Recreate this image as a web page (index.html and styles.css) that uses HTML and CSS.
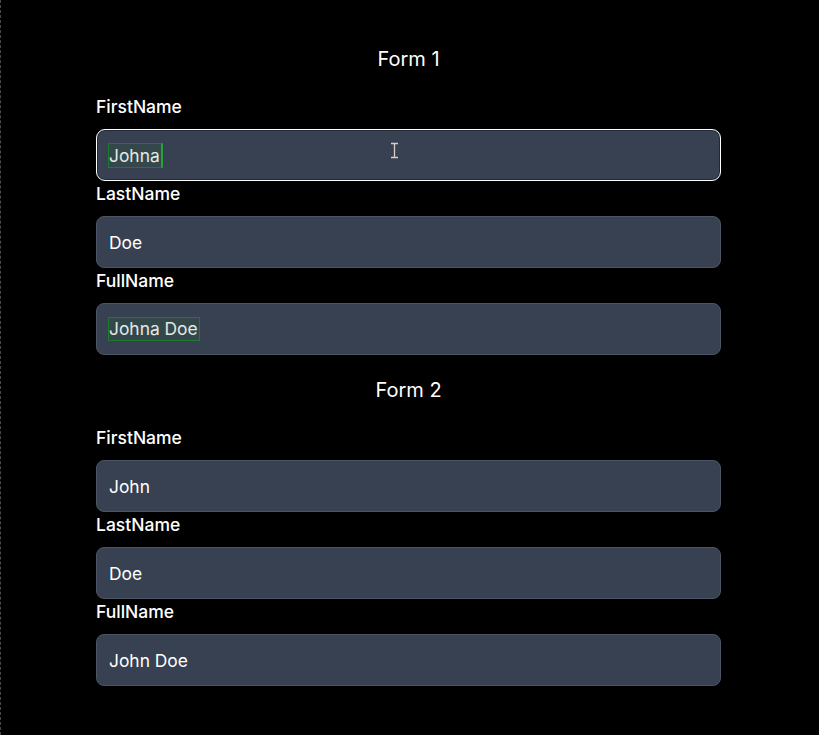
FILE: index.html
```html
<!DOCTYPE html>
<html lang="en">
<head>
<meta charset="utf-8">
<title>Forms</title>
<link rel="stylesheet" href="styles.css">
</head>
<body>
<div class="page">
  <section class="form">
    <h2 class="title">Form 1</h2>
    <div class="field">
      <label class="label">FirstName</label>
      <div class="input focused"><span class="hl caret">Johna</span>
        <svg class="ibeam" width="9" height="17" viewBox="0 0 9 17"><path d="M1 1.5h7M1 15.5h7M4.5 1.5v14" stroke="#d8cfc4" stroke-width="1.3" fill="none"/></svg>
      </div>
    </div>
    <div class="field">
      <label class="label">LastName</label>
      <div class="input">Doe</div>
    </div>
    <div class="field">
      <label class="label">FullName</label>
      <div class="input"><span class="hl">Johna Doe</span></div>
    </div>
  </section>
  <section class="form">
    <h2 class="title">Form 2</h2>
    <div class="field">
      <label class="label">FirstName</label>
      <div class="input">John</div>
    </div>
    <div class="field">
      <label class="label">LastName</label>
      <div class="input">Doe</div>
    </div>
    <div class="field">
      <label class="label">FullName</label>
      <div class="input">John Doe</div>
    </div>
  </section>
</div>
</body>
</html>
```

FILE: styles.css
```css
html, body {
  margin: 0;
  padding: 0;
  background: #000;
  height: 100%;
}
body {
  font-family: Inter, "Noto Sans", sans-serif;
  color: #fff;
  border-left: 1px dashed #4a4a4a;
  box-sizing: border-box;
}
.page {
  width: 625px;
  margin-left: 95px;
  padding-top: 45px;
  display: flex;
  flex-direction: column;
  gap: 21px;
}
.form {
  display: flex;
  flex-direction: column;
}
.title {
  margin: 0 0 21px;
  font-size: 20px;
  line-height: 28px;
  font-weight: 400;
  text-align: center;
}
.field {
  display: flex;
  flex-direction: column;
}
.label {
  font-size: 17.5px;
  line-height: 24px;
  font-weight: 500;
  padding-top: 1px;
  margin-bottom: 10px;
}
.input {
  position: relative;
  height: 52px;
  box-sizing: border-box;
  background: #374151;
  border: 1px solid #4b5563;
  border-radius: 8px;
  padding: 0 12px;
  display: flex;
  align-items: center;
  font-size: 17.4px;
  color: #fff;
}
.input.focused {
  border: 1.5px solid #fff;
  border-radius: 9px;
  box-shadow: inset 0 0 0 1px #1f2937;
}
.hl {
  border: 1px solid #1e7a2e;
  background: rgba(34, 120, 50, 0.14);
  color: #e3e8e3;
  line-height: 22px;
  margin-left: -1px;
  padding: 0 1px 0 0;
}
.hl.caret {
  border-right: 2px solid #23a33a;
  line-height: 23px;
}
.ibeam {
  position: absolute;
  left: 293px;
  top: 12px;
}
```
